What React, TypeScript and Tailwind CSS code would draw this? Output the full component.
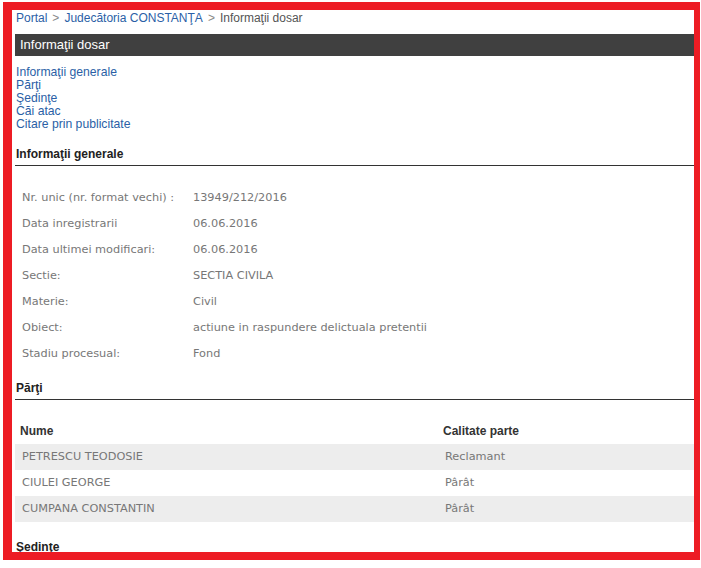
const info: [string, string][] = [
  ["Nr. unic (nr. format vechi) :", "13949/212/2016"],
  ["Data inregistrarii", "06.06.2016"],
  ["Data ultimei modificari:", "06.06.2016"],
  ["Sectie:", "SECTIA CIVILA"],
  ["Materie:", "Civil"],
  ["Obiect:", "actiune in raspundere delictuala pretentii"],
  ["Stadiu procesual:", "Fond"],
];

const parti: [string, string][] = [
  ["PETRESCU TEODOSIE", "Reclamant"],
  ["CIULEI GEORGE", "Pârât"],
  ["CUMPANA CONSTANTIN", "Pârât"],
];

const links = [
  "Informaţii generale",
  "Părţi",
  "Şedinţe",
  "Căi atac",
  "Citare prin publicitate",
];

const SectionTitle = ({ title, className = "" }: { title: string; className?: string }) => (
  <div
    className={`border-b border-[#333] pb-[3px] pl-px text-[12px] font-bold leading-4 text-[#222] ${className}`}
  >
    {title}
  </div>
);

export default function App() {
  return (
    <div className="ml-[3px] mt-[2px] h-[558px] w-[697px] overflow-hidden border-t-8 border-r-[6px] border-b-8 border-l-[9px] border-[#ed1c24] bg-white font-['Liberation_Sans',Arial,sans-serif]">
      <div className="pl-[3px]">
        <div className="pl-px text-[12px] leading-4 text-[#555]">
          <a className="text-[#2b5fa6]">Portal</a>
          <span className="mx-[5px] text-[#888]">&gt;</span>
          <a className="text-[#2b5fa6]">Judecătoria CONSTANŢA</a>
          <span className="mx-[5px] text-[#888]">&gt;</span>
          <span>Informaţii dosar</span>
        </div>

        <div className="mt-2 h-[22px] bg-[#404040] pl-[5px] text-[13px] leading-[22px] text-white">
          Informaţii dosar
        </div>

        <ul className="mt-[10px] pl-px text-[12.2px] leading-[13px] text-[#2b5fa6]">
          {links.map((l) => (
            <li key={l}>
              <a>{l}</a>
            </li>
          ))}
        </ul>

        <SectionTitle title="Informaţii generale" className="mt-[15px]" />

        <div className="mt-[19px] font-['DejaVu_Sans',Verdana,sans-serif] text-[11.3px] text-[#777]">
          {info.map(([k, v]) => (
            <div key={k} className="grid h-[26px] grid-cols-[171px_1fr] items-center pl-[7px]">
              <span>{k}</span>
              <span>{v}</span>
            </div>
          ))}
        </div>

        <SectionTitle title="Părţi" className="mt-[13px]" />

        <div className="mt-[18px]">
          <div className="grid h-[26px] grid-cols-[423px_1fr] items-center pl-[5px] text-[12px] font-bold text-[#333]">
            <span>Nume</span>
            <span>Calitate parte</span>
          </div>
          {parti.map(([n, c], i) => (
            <div
              key={n}
              className={`grid h-[26px] grid-cols-[423px_1fr] items-center pl-[7px] font-['DejaVu_Sans',Verdana,sans-serif] text-[11.3px] text-[#777] ${
                i % 2 === 0 ? "bg-[#ededed]" : "bg-white"
              }`}
            >
              <span>{n}</span>
              <span>{c}</span>
            </div>
          ))}
        </div>

        <SectionTitle title="Şedinţe" className="mt-[17px]" />
      </div>
    </div>
  );
}
